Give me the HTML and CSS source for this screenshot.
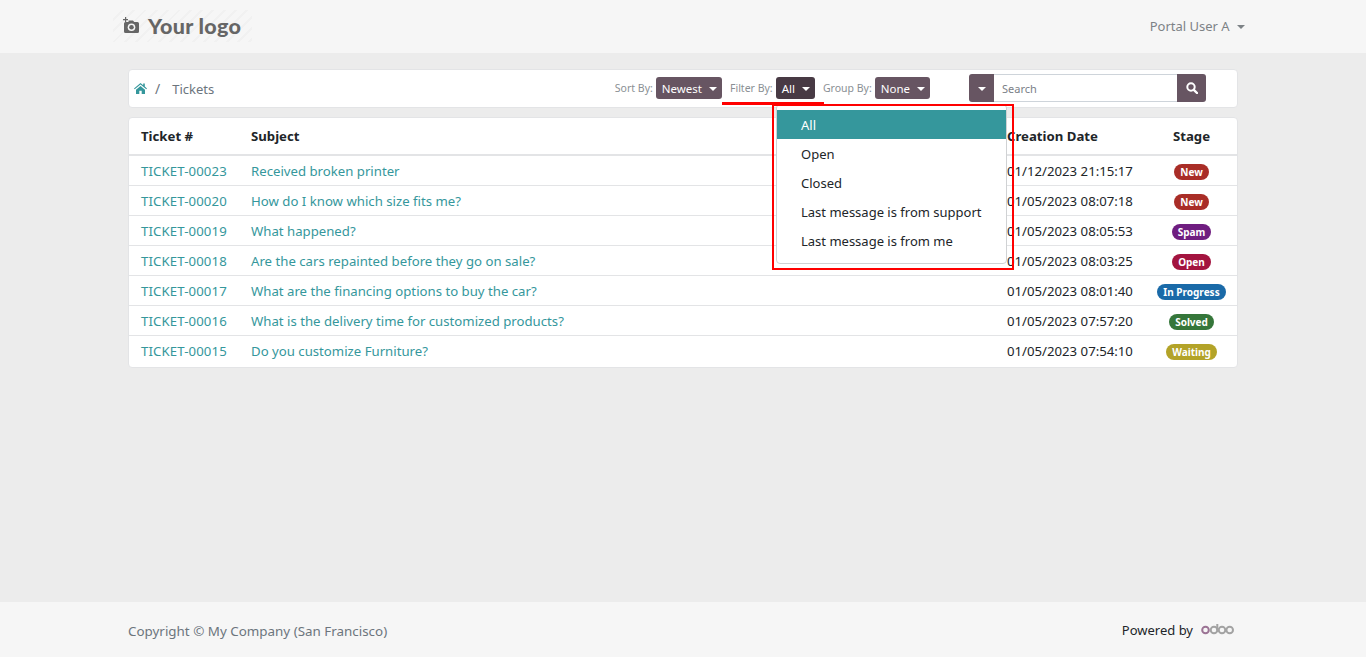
FILE: index.html
```html
<!DOCTYPE html>
<html lang="en">
<head>
    <meta charset="UTF-8">
    <meta name="viewport" content="width=device-width, initial-scale=1.0">
    <title>Tickets</title>
    <link rel="stylesheet" href="styles.css">
</head>
<body>
    <header class="topbar">
        <div class="wrap topbar-row">
            <a class="logo" href="#">
                <svg class="logo-icon" width="18" height="17" viewBox="0 0 18 17">
                    <path d="M3 0h1.2v2H6v1.2H4.200V5H3V3.200H1V2h2z" fill="#666"/>
                    <path d="M2 6.500a1.500 1.500 0 0 1 1.500-1.500H6.500V3.500H11l1.200 1.500h3.300A1.500 1.500 0 0 1 17 6.500v8A1.500 1.500 0 0 1 15.500 16h-12A1.500 1.500 0 0 1 2 14.500z" fill="#666"/>
                    <circle cx="9.500" cy="10.300" r="3.800" fill="#f6f6f6"/>
                    <circle cx="9.500" cy="10.300" r="2.300" fill="#666"/>
                </svg>
                <span class="logo-text">Your logo</span>
            </a>
            <div class="user">Portal User A <span class="caret caret-grey"></span></div>
        </div>
    </header>

    <main class="wrap content">
        <div class="panel toolbar">
            <nav class="crumbs">
                <svg class="home" width="13" height="11" viewBox="0 0 13 11">
                    <path d="M6.500 0 0 5.400l.7.800L6.500 1.500l5.800 4.700.7-.8L10.800 3.600V.6H9.200v1.700zM2 6.700V11h3.300V7.700h2.400V11H11V6.700L6.500 3z" fill="#35979c"/>
                </svg>
                <span class="sep">/</span>
                <span class="current">Tickets</span>
            </nav>
            <div class="controls">
                <span class="ctl-label">Sort By:</span>
                <button class="btn">Newest <span class="caret"></span></button>
                <span class="ctl-label label-filter">Filter By:</span>
                <button class="btn btn-active">All <span class="caret"></span></button>
                <span class="ctl-label label-group">Group By:</span>
                <button class="btn">None <span class="caret"></span></button>
                <div class="search">
                    <button class="search-drop"><span class="caret"></span></button>
                    <input class="search-input" type="text" placeholder="Search">
                    <button class="search-go">
                        <svg width="12" height="12" viewBox="0 0 12 12">
                            <circle cx="5" cy="5" r="3.700" fill="none" stroke="#fff" stroke-width="2"/>
                            <path d="M7.800 7.800 11 11" stroke="#fff" stroke-width="2.400" stroke-linecap="round"/>
                        </svg>
                    </button>
                </div>
            </div>
        </div>

        <div class="panel tickets">
            <table>
                <thead>
                    <tr>
                        <th class="col-id">Ticket #</th>
                        <th class="col-subject">Subject</th>
                        <th class="col-date">Creation Date</th>
                        <th class="col-stage">Stage</th>
                    </tr>
                </thead>
                <tbody>
                    <tr>
                        <td><a href="#">TICKET-00023</a></td>
                        <td><a href="#">Received broken printer</a></td>
                        <td>01/12/2023 21:15:17</td>
                        <td class="col-stage"><span class="pill pill-new">New</span></td>
                    </tr>
                    <tr>
                        <td><a href="#">TICKET-00020</a></td>
                        <td><a href="#">How do I know which size fits me?</a></td>
                        <td>01/05/2023 08:07:18</td>
                        <td class="col-stage"><span class="pill pill-new">New</span></td>
                    </tr>
                    <tr>
                        <td><a href="#">TICKET-00019</a></td>
                        <td><a href="#">What happened?</a></td>
                        <td>01/05/2023 08:05:53</td>
                        <td class="col-stage"><span class="pill pill-spam">Spam</span></td>
                    </tr>
                    <tr>
                        <td><a href="#">TICKET-00018</a></td>
                        <td><a href="#">Are the cars repainted before they go on sale?</a></td>
                        <td>01/05/2023 08:03:25</td>
                        <td class="col-stage"><span class="pill pill-open">Open</span></td>
                    </tr>
                    <tr>
                        <td><a href="#">TICKET-00017</a></td>
                        <td><a href="#">What are the financing options to buy the car?</a></td>
                        <td>01/05/2023 08:01:40</td>
                        <td class="col-stage"><span class="pill pill-progress">In Progress</span></td>
                    </tr>
                    <tr>
                        <td><a href="#">TICKET-00016</a></td>
                        <td><a href="#">What is the delivery time for customized products?</a></td>
                        <td>01/05/2023 07:57:20</td>
                        <td class="col-stage"><span class="pill pill-solved">Solved</span></td>
                    </tr>
                    <tr>
                        <td><a href="#">TICKET-00015</a></td>
                        <td><a href="#">Do you customize Furniture?</a></td>
                        <td>01/05/2023 07:54:10</td>
                        <td class="col-stage"><span class="pill pill-waiting">Waiting</span></td>
                    </tr>
                </tbody>
            </table>
        </div>

        <!-- open filter menu + the red marks drawn over the screenshot -->
        <ul class="menu">
            <li class="menu-on">All</li>
            <li>Open</li>
            <li>Closed</li>
            <li>Last message is from support</li>
            <li>Last message is from me</li>
        </ul>
        <div class="mark-line"></div>
        <div class="mark-box"></div>
    </main>

    <footer class="bottombar">
        <div class="wrap bottombar-row">
            <span class="copy">Copyright © My Company (San Francisco)</span>
            <span class="powered">Powered by
                <svg class="odoo" width="33" height="11" viewBox="0 0 33 11">
                    <circle cx="4.500" cy="6" r="3.300" fill="none" stroke="#9b7394" stroke-width="2"/>
                    <circle cx="13" cy="6" r="3.300" fill="none" stroke="#a3a3a3" stroke-width="2"/>
                    <path d="M16.300 0v6" stroke="#a3a3a3" stroke-width="2"/>
                    <circle cx="21" cy="6" r="3.300" fill="none" stroke="#a3a3a3" stroke-width="2"/>
                    <circle cx="28.700" cy="6" r="3.300" fill="none" stroke="#a3a3a3" stroke-width="2"/>
                </svg>
            </span>
        </div>
    </footer>
</body>
</html>
```

FILE: styles.css
```css
* {
    box-sizing: border-box;
}
body {
    margin: 0;
    min-height: 100vh;
    display: flex;
    flex-direction: column;
    background: #ececec;
    font-family: "Noto Sans", "Open Sans", sans-serif;
    font-size: 13px;
    line-height: 20px;
    color: #212529;
}
a {
    color: #35979c;
    text-decoration: none;
}
.wrap {
    width: 1110px;
    margin: 0 auto;
}

/* top bar */
.topbar {
    height: 53px;
    background: #f6f6f6;
}
.topbar-row {
    height: 53px;
    display: flex;
    align-items: center;
    justify-content: space-between;
}
.logo {
    display: flex;
    align-items: center;
    gap: 8px;
    height: 32px;
    width: 139px;
    margin: -2px 0 0 -15px;
    padding-left: 9px;
    color: #666;
    font-family: Lato, sans-serif;
    font-size: 21.500px;
    font-weight: 900;
    letter-spacing: .3px;
    background: repeating-linear-gradient(135deg, #f6f6f6 0 6px, #f1f1f1 6px 8px);
}
.user {
    margin: -2px -7px 0 0;
    font-size: 13px;
    color: #7d8286;
}
.caret {
    display: inline-block;
    width: 0;
    height: 0;
    margin-left: 4px;
    vertical-align: 2px;
    border-top: 4px solid #fff;
    border-left: 4px solid transparent;
    border-right: 4px solid transparent;
}
.caret-grey {
    border-top-color: #7d8286;
}

/* content */
.content {
    position: relative;
    flex: 1;
    padding-top: 16px;
}
.panel {
    background: #fff;
    border: 1px solid #e3e4e6;
    border-radius: 4px;
}
.toolbar {
    height: 39px;
    display: flex;
    align-items: center;
    justify-content: space-between;
    padding: 0 31px 0 5px;
}
.crumbs {
    display: flex;
    align-items: center;
    color: #6c757d;
}
.sep {
    margin: 0 12px 0 8px;
    font-size: 14px;
}
.controls {
    display: flex;
    align-items: center;
    height: 28px;
    margin-top: -1px;
}
.ctl-label {
    margin-right: 3px;
    font-size: 10.500px;
    color: #8a8f94;
}
.label-filter {
    margin-left: 8px;
}
.label-group {
    margin-left: 8px;
}
.btn {
    height: 22px;
    padding: 1px 5px 0 6px;
    border: 0;
    border-radius: 3px;
    background: #675562;
    color: #fff;
    font: inherit;
    font-size: 11.500px;
    line-height: 21px;
}
.btn-active {
    background: #483a44;
}
.search {
    display: flex;
    height: 28px;
    width: 237px;
    margin-left: 39px;
}
.search-drop {
    width: 25px;
    border: 0;
    border-radius: 3px 0 0 3px;
    background: #675562;
    padding: 0;
}
.search-drop .caret {
    margin: 0;
}
.search-input {
    flex: 1;
    min-width: 0;
    border: 1px solid #ced4da;
    border-left: 0;
    border-right: 0;
    padding: 2px 8px 0;
    font: inherit;
    font-size: 11px;
    outline: none;
}
.search-input::placeholder {
    color: #7a8087;
}
.search-go {
    display: flex;
    align-items: center;
    justify-content: center;
    width: 29px;
    border: 0;
    border-radius: 0 3px 3px 0;
    background: #675562;
    padding: 0;
}

/* ticket table */
.tickets {
    margin-top: 9px;
    overflow: hidden;
}
table {
    width: 100%;
    border-collapse: collapse;
    font-size: 13.200px;
}
th {
    height: 37px;
    padding: 0 12px 1px;
    text-align: left;
    font-weight: 700;
    border-bottom: 2px solid #e3e4e6;
}
td {
    height: 30px;
    padding: 2px 12px 0;
    border-bottom: 1px solid #e3e4e6;
    white-space: nowrap;
}
td:first-child {
    letter-spacing: .12px;
}
tbody tr:last-child td {
    height: 32px;
    padding-top: 0;
    border-bottom: 0;
}
.col-id {
    width: 110px;
}
.col-date {
    width: 151px;
}
th.col-stage {
    width: 91px;
    padding: 0 0 1px;
    text-align: center;
}
td.col-stage {
    width: 91px;
    padding: 2px 0 0;
    text-align: center;
}
.pill {
    display: inline-block;
    padding: 0 6px;
    border-radius: 8px;
    color: #fff;
    font-size: 10px;
    font-weight: 700;
    line-height: 16px;
    vertical-align: middle;
}
tbody tr:first-child .pill,
tbody tr:last-child .pill {
    position: relative;
    top: -1px;
}
.pill-new { background: #a92d27; }
.pill-spam { background: #6f1d80; }
.pill-open { background: #a3143f; }
.pill-progress { background: #1a6aa8; }
.pill-solved { background: #35763a; }
.pill-waiting { background: #b3a328; }

/* open dropdown */
.menu {
    position: absolute;
    top: 51px;
    left: 648px;
    width: 231px;
    height: 160px;
    margin: 0;
    padding: 5px 0 0;
    list-style: none;
    background: #fff;
    border: 1px solid #d0d2d4;
    border-radius: 4px;
}
.menu li {
    height: 29px;
    padding-left: 24px;
    line-height: 31px;
}
.menu .menu-on {
    background: #35979c;
    color: #fff;
}
.mark-line {
    position: absolute;
    top: 49px;
    left: 594px;
    width: 102px;
    height: 3px;
    background: #f00;
}
.mark-box {
    position: absolute;
    top: 51px;
    left: 644px;
    width: 242px;
    height: 166px;
    border: 2px solid #f00;
}

/* footer */
.bottombar {
    height: 55px;
    background: #f6f6f6;
}
.bottombar-row {
    height: 55px;
    display: flex;
    align-items: center;
    justify-content: space-between;
}
.copy {
    position: relative;
    top: 1px;
    font-size: 13.400px;
    color: #6c757d;
}
.powered {
    display: flex;
    align-items: center;
    gap: 8px;
    margin-right: 4px;
}
```
